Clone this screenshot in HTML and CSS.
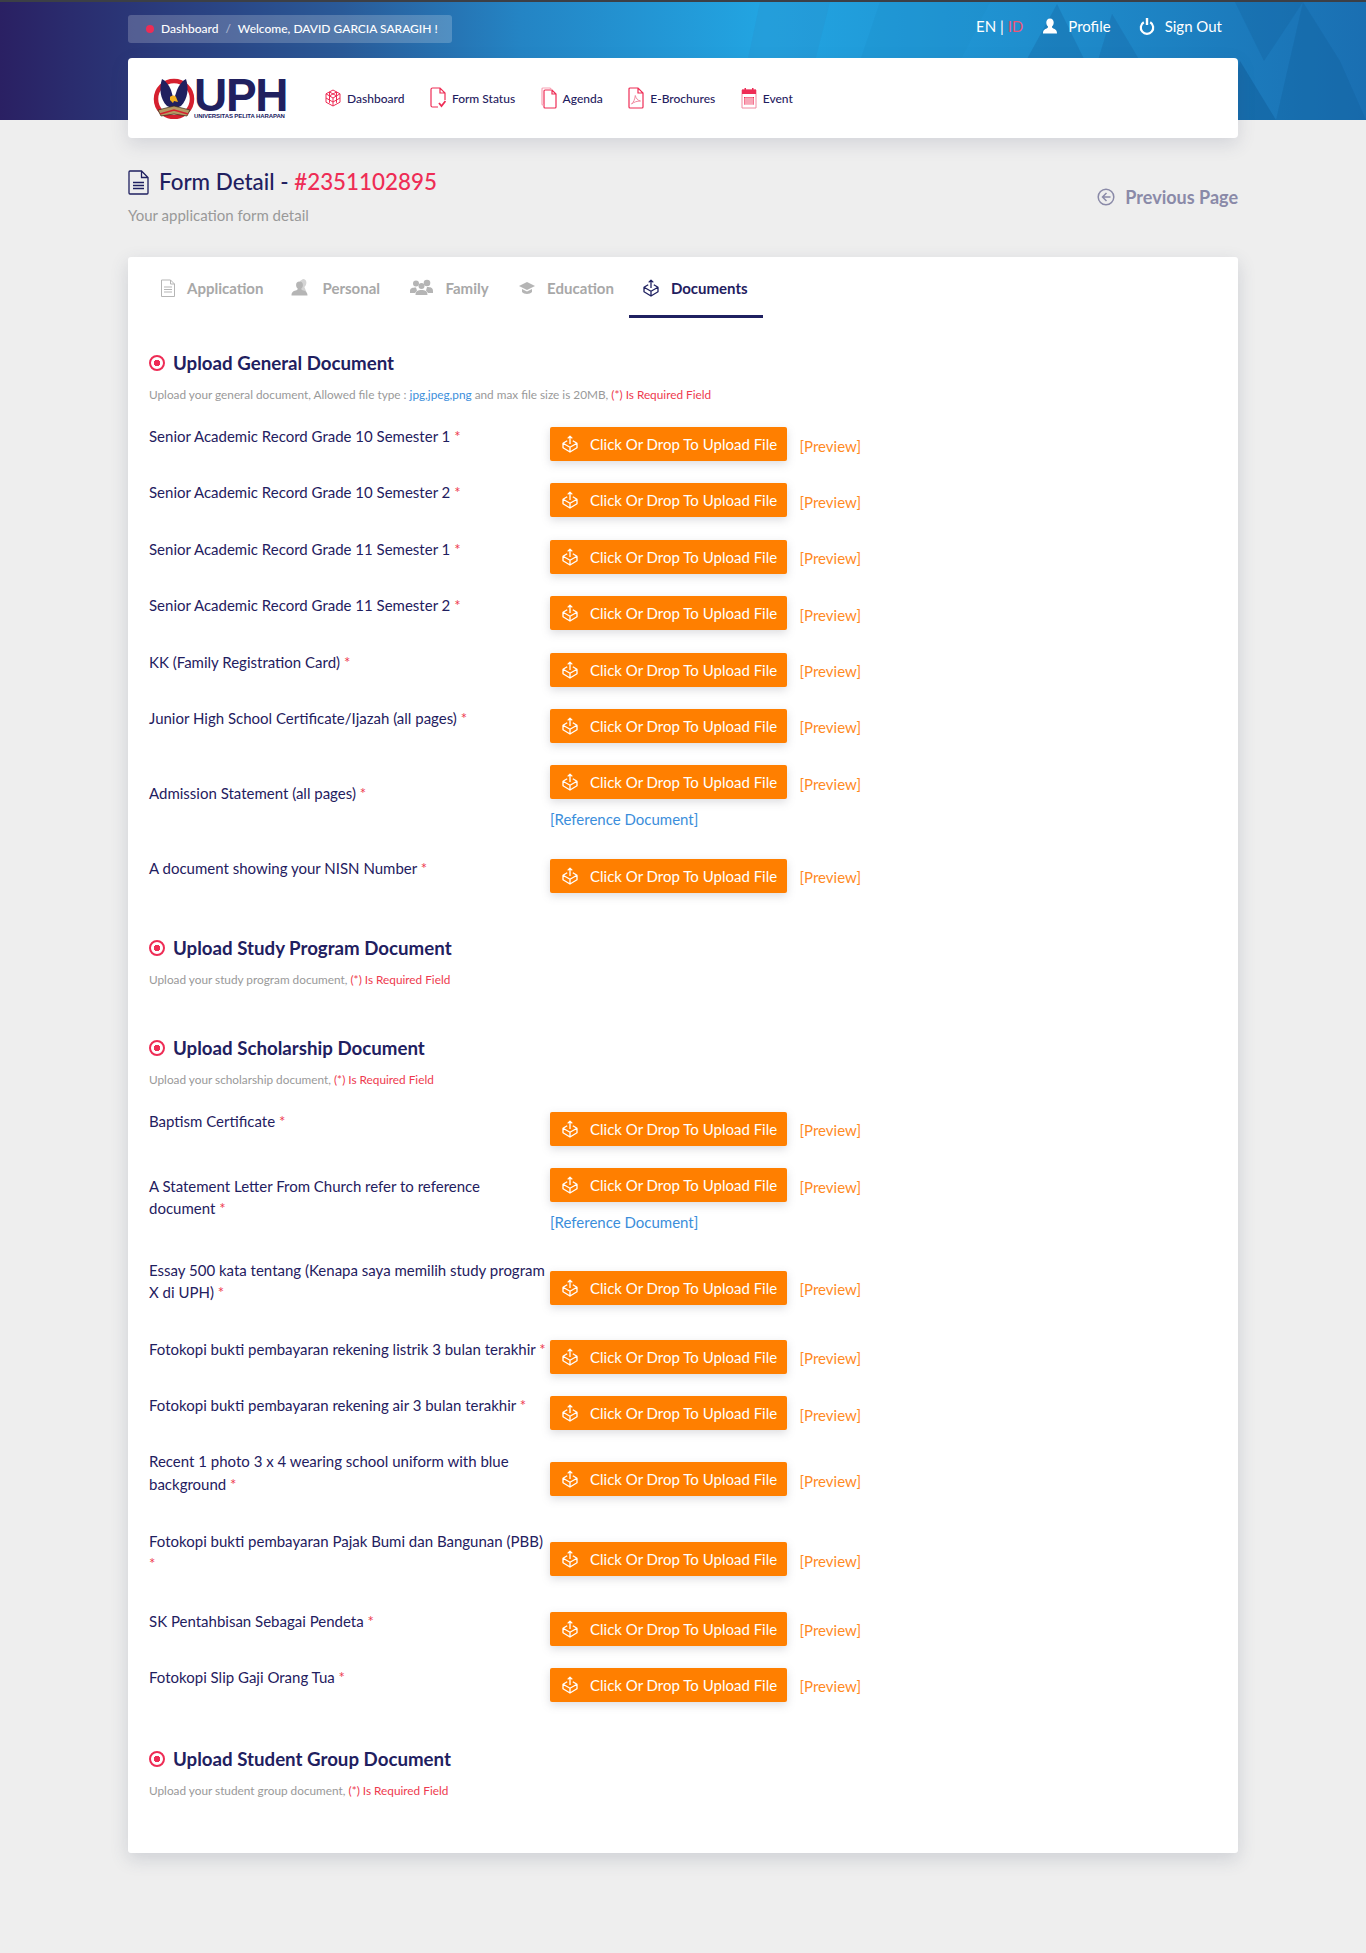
FILE: index.html
```html
<!DOCTYPE html>
<html>
<head>
  <title>Form Detail</title>
  <link rel="stylesheet" href="styles.css">
</head>
<body>
  <svg class="sprites" width="0" height="0">
    <symbol id="box" viewBox="0 0 16 18">
      <path d="M8 9V1.200M5.700 3.400 8 1.100l2.300 2.300M5.200 5.800 1 8.300l7 4 7-4-4.200-2.500M1 8.300v4.400l7 4.300 7-4.300V8.300M8 12.300V17" fill="none" stroke="currentColor" stroke-width="1.300" stroke-linejoin="round"/>
    </symbol>
  </svg>

  <header class="hero">
    <svg class="hero-shapes" viewBox="0 0 1366 120" preserveAspectRatio="none">
      <polygon points="760,0 830,0 800,120 735,120" fill="#2a8cc9" opacity=".25"/>
      <polygon points="880,0 990,0 960,60 920,120 880,120 860,60" fill="#1b8ac8" opacity=".25"/>
      <polygon points="1057,2 1084,58 1110,120 1000,120 1027,58" fill="#145f9c" opacity=".3"/>
      <polygon points="1112,12 1140,60 1160,120 1080,120" fill="#145f9c" opacity=".28"/>
      <polygon points="1303,0 1340,60 1366,120 1276,120" fill="#0f5c97" opacity=".3"/>
      <polygon points="1240,60 1276,120 1225,120" fill="#0f5c97" opacity=".45"/>
      <polygon points="1235,0 1303,0 1264,60" fill="#145f9c" opacity=".3"/>
    </svg>
    <div class="wrap hero-top">
      <div class="crumb">
        <span class="crumb-dot"></span>
        <span>Dashboard</span>
        <span class="crumb-sep">/</span>
        <span>Welcome, DAVID GARCIA SARAGIH !</span>
      </div>
      <div class="top-links">
        <span class="lang">EN | <span class="lang-off">ID</span></span>
        <a class="top-link profile">
          <svg width="16" height="16" viewBox="0 0 16 16"><path d="M8 .5c2.400 0 3.700 1.800 3.700 4 0 1.800-.8 3.300-1.700 4.100 0 1.100.3 1.500 1.300 1.900 1.800.7 3.700 1.400 3.700 5H1c0-3.600 1.900-4.300 3.700-5 1-.4 1.300-.8 1.300-1.900-.9-.8-1.700-2.300-1.700-4.100 0-2.200 1.300-4 3.700-4z" fill="#fff"/></svg>
          Profile
        </a>
        <a class="top-link signout">
          <svg width="16" height="18" viewBox="0 0 16 18"><path d="M4.800 5.300a6.200 6.200 0 1 0 6.400 0" fill="none" stroke="#fff" stroke-width="2.200"/><path d="M8 1v7" stroke="#fff" stroke-width="2.400"/></svg>
          Sign Out
        </a>
      </div>
    </div>
  </header>

  <div class="wrap">
    <nav class="navcard">
      <div class="logo">
        <svg class="logo-mark" width="42" height="42" viewBox="0 0 42 42">
          <circle cx="21" cy="22" r="18" fill="#fff" stroke="#d5202f" stroke-width="4.500"/>
          <path d="M9 2c4 2 7 6 9 11l2 7 2-1 2-6c2-5 5-9 9-11 3 9 2 20-5 27l-7 3-7-3C7 22 6 11 9 2z" fill="#20205f"/>
          <path d="M17 20c2-2 5-2 6 0l2 5-4-1-1 2-3-3z" fill="#f2b01e"/>
          <path d="M5 33l16-4 16 4-3 6-13-2-13 2z" fill="#b59a63" stroke="#3a2a1a" stroke-width=".7"/>
          <path d="M7 37l14-4 14 4" fill="none" stroke="#d5202f" stroke-width="1.500"/>
        </svg>
        <div class="logo-text">
          <div class="logo-big">UPH</div>
          <div class="logo-small">UNIVERSITAS PELITA HARAPAN</div>
        </div>
      </div>
      <a class="nav-item">
        <svg width="16" height="18" viewBox="0 0 16 18" fill="none" stroke="#ee2c55" stroke-width="1"><path d="M8 1l7 3.800v8.400L8 17l-7-3.800V4.800z"/><path d="M1 4.800 8 9l7-4.200M8 9v8M4.500 3v10.800M11.500 3v10.800M1 9l7 4 7-4M4.500 6.900l7-3.900M4.500 3l7 3.900"/></svg>
        Dashboard
      </a>
      <a class="nav-item">
        <svg width="16" height="22" viewBox="0 0 16 22" fill="none" stroke="#ee2c55" stroke-width="1.200"><path d="M8 20H2.500A1.500 1.500 0 0 1 1 18.500V2.500A1.500 1.500 0 0 1 2.500 1H10l5 5v7M10 1v5h5"/><path d="M9 16l2.500 3L15.500 14" stroke-width="1.800"/></svg>
        Form Status
      </a>
      <a class="nav-item">
        <svg width="16" height="22" viewBox="0 0 16 22" fill="none" stroke="#ee2c55" stroke-width="1.200"><path d="M4 21h10a1 1 0 0 0 1-1V7l-4-4H4a1 1 0 0 0-1 1v16a1 1 0 0 0 1 1zM11 3v4h4"/><path d="M3 18H2a1 1 0 0 1-1-1V2a1 1 0 0 1 1-1h7l2 2" stroke="#f7a3b5"/></svg>
        Agenda
      </a>
      <a class="nav-item">
        <svg width="16" height="22" viewBox="0 0 16 22" fill="none" stroke="#ee2c55" stroke-width="1.200"><path d="M2 21h12a1 1 0 0 0 1-1V6l-5-5H2a1 1 0 0 0-1 1v18a1 1 0 0 0 1 1zM10 1v5h5"/><path d="M3.500 17c2-1.500 3.500-5 3.800-8.500.7 3 2.500 5 5.200 5.500-3.500 0-6.500 1-9 3z" stroke-width="1" stroke="#f08aa0"/></svg>
        E-Brochures
      </a>
      <a class="nav-item">
        <svg width="16" height="22" viewBox="0 0 16 22"><path d="M1 3h14v18H1z" fill="#fff" stroke="#f08aa0" stroke-width="1"/><path d="M1 2.500h14V7H1zM3.500 1h1.500v2H3.500zM11 1h1.500v2H11z" fill="#ee2c55"/><path d="M3 10h10v7.500H3z" fill="#ee2c55"/><path d="M3 12h10M3 14h10M3 16h10M5 10v8M7 10v8M9 10v8M11 10v8" stroke="#fff" stroke-width=".7"/></svg>
        Event
      </a>
    </nav>

    <div class="page-head">
      <div>
        <h1 class="page-title">
          <svg width="21" height="25" viewBox="0 0 21 25" fill="none" stroke="#1f2060" stroke-width="1.300"><path d="M1 2a1 1 0 0 1 1-1h11.500L20 7.500V23a1 1 0 0 1-1 1H2a1 1 0 0 1-1-1zM13.500 1v6.500H20"/><path d="M5 12.500h11M5 15.500h11M5 18.500h11"/></svg>
          <span>Form Detail - <span class="form-no">#2351102895</span></span>
        </h1>
        <p class="page-sub">Your application form detail</p>
      </div>
      <a class="prev-page">
        <svg width="18" height="18" viewBox="0 0 18 18" fill="none" stroke="#8a8aa8" stroke-width="1.500"><circle cx="9" cy="9" r="7.800"/><path d="M9.500 5 5.500 9l4 4M5.500 9h8"/></svg>
        Previous Page
      </a>
    </div>

    <main class="card">
      <div class="tabs">
        <a class="tab">
          <svg width="14" height="18" viewBox="0 0 14 18" fill="none" stroke="#b5b5b5"><path d="M.5 1h9l4 4v12.500H.5zM9.500 1v4h4M3 8h8M3 10.500h8M3 13h8"/></svg>
          Application
        </a>
        <a class="tab">
          <svg width="19" height="18" viewBox="0 0 19 18"><path d="M12 0c2 0 3.400 1.500 3.400 3.500 0 2-1 3.500-2 4.500l2 5H9V2z" fill="#d4d4d4"/><path d="M8.500 2.500c2.300 0 3.400 1.500 3.400 3.500 0 1.600-.8 2.900-1.600 3.600 0 1 .3 1.300 1.300 1.700 2 .6 4.900 1.200 4.900 5.200H.5c0-4 2.900-4.600 4.900-5.200 1-.4 1.300-.7 1.300-1.700C5.900 8.900 5.100 7.600 5.100 6c0-2 1.100-3.500 3.400-3.500z" fill="#b5b5b5"/></svg>
          Personal
        </a>
        <a class="tab tab-family">
          <svg width="23" height="18" viewBox="0 0 23 18" fill="#b5b5b5"><circle cx="6" cy="4.500" r="3"/><circle cx="17" cy="4" r="3.300"/><circle cx="11.500" cy="7" r="3"/><path d="M0 12c0-3 2.500-3.500 6-3.500l1 3-2 2.500H0zM23 12c0-3.500-2.500-4-6-4l-1 3.500 2 2.500h5zM5.500 16c0-4 2.500-5 6-5s6 1 6 5z"/></svg>
          Family
        </a>
        <a class="tab tab-education">
          <svg width="16" height="14" viewBox="0 0 16 14" fill="#b5b5b5"><path d="M8 1l8 4-8 4-8-4z"/><path d="M3 8l5 2.500L13 8v3c-2 2.500-8 2.500-10 0z"/></svg>
          Education
        </a>
        <a class="tab tab-active">
          <svg width="16" height="18"><use href="#box"/></svg>
          Documents
        </a>
      </div>

      <section class="doc-section first">
        <h2 class="doc-title"><span class="bullet"></span>Upload General Document</h2>
        <p class="doc-note">Upload your general document, Allowed file type : <span class="blue">jpg,jpeg,png</span> and max file size is 20MB, <span class="red">(*) Is Required Field</span></p>

        <div class="row"><div class="row-label">Senior Academic Record Grade 10 Semester 1 <i>*</i></div><div class="row-ctl"><a class="upload"><svg width="16" height="18"><use href="#box"/></svg>Click Or Drop To Upload File</a><a class="preview">[Preview]</a></div></div>
        <div class="row"><div class="row-label">Senior Academic Record Grade 10 Semester 2 <i>*</i></div><div class="row-ctl"><a class="upload"><svg width="16" height="18"><use href="#box"/></svg>Click Or Drop To Upload File</a><a class="preview">[Preview]</a></div></div>
        <div class="row"><div class="row-label">Senior Academic Record Grade 11 Semester 1 <i>*</i></div><div class="row-ctl"><a class="upload"><svg width="16" height="18"><use href="#box"/></svg>Click Or Drop To Upload File</a><a class="preview">[Preview]</a></div></div>
        <div class="row"><div class="row-label">Senior Academic Record Grade 11 Semester 2 <i>*</i></div><div class="row-ctl"><a class="upload"><svg width="16" height="18"><use href="#box"/></svg>Click Or Drop To Upload File</a><a class="preview">[Preview]</a></div></div>
        <div class="row"><div class="row-label">KK (Family Registration Card) <i>*</i></div><div class="row-ctl"><a class="upload"><svg width="16" height="18"><use href="#box"/></svg>Click Or Drop To Upload File</a><a class="preview">[Preview]</a></div></div>
        <div class="row"><div class="row-label">Junior High School Certificate/Ijazah (all pages) <i>*</i></div><div class="row-ctl"><a class="upload"><svg width="16" height="18"><use href="#box"/></svg>Click Or Drop To Upload File</a><a class="preview">[Preview]</a></div></div>
        <div class="row row-admission"><div class="row-label">Admission Statement (all pages) <i>*</i></div><div><div class="row-ctl"><a class="upload"><svg width="16" height="18"><use href="#box"/></svg>Click Or Drop To Upload File</a><a class="preview">[Preview]</a></div><a class="ref-doc">[Reference Document]</a></div></div>
        <div class="row"><div class="row-label">A document showing your NISN Number <i>*</i></div><div class="row-ctl"><a class="upload"><svg width="16" height="18"><use href="#box"/></svg>Click Or Drop To Upload File</a><a class="preview">[Preview]</a></div></div>
      </section>

      <section class="doc-section study">
        <h2 class="doc-title"><span class="bullet"></span>Upload Study Program Document</h2>
        <p class="doc-note">Upload your study program document, <span class="red">(*) Is Required Field</span></p>
      </section>

      <section class="doc-section scholarship">
        <h2 class="doc-title"><span class="bullet"></span>Upload Scholarship Document</h2>
        <p class="doc-note">Upload your scholarship document, <span class="red">(*) Is Required Field</span></p>

        <div class="row"><div class="row-label">Baptism Certificate <i>*</i></div><div class="row-ctl"><a class="upload"><svg width="16" height="18"><use href="#box"/></svg>Click Or Drop To Upload File</a><a class="preview">[Preview]</a></div></div>
        <div class="row row-statement"><div class="row-label">A Statement Letter From Church refer to reference<br>document <i>*</i></div><div><div class="row-ctl"><a class="upload"><svg width="16" height="18"><use href="#box"/></svg>Click Or Drop To Upload File</a><a class="preview">[Preview]</a></div><a class="ref-doc">[Reference Document]</a></div></div>
        <div class="row row-two row-essay"><div class="row-label">Essay 500 kata tentang (Kenapa saya memilih study program X di UPH) <i>*</i></div><div class="row-ctl"><a class="upload"><svg width="16" height="18"><use href="#box"/></svg>Click Or Drop To Upload File</a><a class="preview">[Preview]</a></div></div>
        <div class="row"><div class="row-label">Fotokopi bukti pembayaran rekening listrik 3 bulan terakhir <i>*</i></div><div class="row-ctl"><a class="upload"><svg width="16" height="18"><use href="#box"/></svg>Click Or Drop To Upload File</a><a class="preview">[Preview]</a></div></div>
        <div class="row"><div class="row-label">Fotokopi bukti pembayaran rekening air 3 bulan terakhir <i>*</i></div><div class="row-ctl"><a class="upload"><svg width="16" height="18"><use href="#box"/></svg>Click Or Drop To Upload File</a><a class="preview">[Preview]</a></div></div>
        <div class="row row-two"><div class="row-label">Recent 1 photo 3 x 4 wearing school uniform with blue background <i>*</i></div><div class="row-ctl"><a class="upload"><svg width="16" height="18"><use href="#box"/></svg>Click Or Drop To Upload File</a><a class="preview">[Preview]</a></div></div>
        <div class="row row-two"><div class="row-label">Fotokopi bukti pembayaran Pajak Bumi dan Bangunan (PBB)<br><i>*</i></div><div class="row-ctl"><a class="upload"><svg width="16" height="18"><use href="#box"/></svg>Click Or Drop To Upload File</a><a class="preview">[Preview]</a></div></div>
        <div class="row"><div class="row-label">SK Pentahbisan Sebagai Pendeta <i>*</i></div><div class="row-ctl"><a class="upload"><svg width="16" height="18"><use href="#box"/></svg>Click Or Drop To Upload File</a><a class="preview">[Preview]</a></div></div>
        <div class="row"><div class="row-label">Fotokopi Slip Gaji Orang Tua <i>*</i></div><div class="row-ctl"><a class="upload"><svg width="16" height="18"><use href="#box"/></svg>Click Or Drop To Upload File</a><a class="preview">[Preview]</a></div></div>
      </section>

      <section class="doc-section group">
        <h2 class="doc-title"><span class="bullet"></span>Upload Student Group Document</h2>
        <p class="doc-note">Upload your student group document, <span class="red">(*) Is Required Field</span></p>
      </section>
    </main>
  </div>
</body>
</html>
```

FILE: styles.css
```css
* {
  box-sizing: border-box;
}
html, body {
  margin: 0;
  padding: 0;
}
body {
  font-family: Lato, "Liberation Sans", sans-serif;
  font-size: 15px;
  color: #1f2060;
  background: #eeeeee;
  height: 1953px;
  overflow: hidden;
}
a {
  color: inherit;
  text-decoration: none;
}
.sprites {
  position: absolute;
}
.wrap {
  width: 1110px;
  margin: 0 auto;
}

/* top */
.hero {
  position: relative;
  height: 120px;
  border-top: 2px solid #3c3f46;
  background: linear-gradient(90deg, #2a2063 0%, #2a5a98 25%, #2484c4 38%, #22a5e2 56%, #1f8fce 75%, #1a6fb2 100%);
}
.hero-shapes {
  position: absolute;
  top: 0;
  left: 0;
  width: 100%;
  height: 100%;
}
.hero-top {
  position: relative;
  display: flex;
  justify-content: space-between;
  padding-top: 13px;
}
.crumb {
  display: flex;
  align-items: center;
  width: 324px;
  height: 28px;
  padding-left: 18px;
  padding-bottom: 1px;
  border-radius: 3px;
  background: rgba(255, 255, 255, .2);
  color: #fff;
  font-size: 12px;
  font-weight: 500;
}
.crumb-dot {
  width: 8px;
  height: 8px;
  margin-right: 7px;
  border-radius: 50%;
  background: #ee2c55;
}
.crumb-sep {
  margin: 0 7px;
  opacity: .5;
}
.top-links {
  display: flex;
  align-items: center;
  height: 22px;
  padding-right: 16px;
  color: #fff;
  font-size: 15px;
}
.lang-off {
  color: #ee5577;
}
.top-link {
  display: flex;
  align-items: center;
  gap: 10px;
}
.profile {
  margin-left: 19px;
}
.signout {
  margin-left: 28px;
}

/* nav */
.navcard {
  display: flex;
  align-items: center;
  height: 80px;
  margin-top: -62px;
  position: relative;
  padding-left: 25px;
  border-radius: 4px;
  background: #fff;
  box-shadow: 0 6px 18px rgba(60, 70, 100, .15);
}
.logo {
  display: flex;
  align-items: flex-start;
  width: 172px;
  height: 42px;
}
.logo-mark {
  flex: none;
}
.logo-text {
  margin-left: -1px;
}
.logo-big {
  font-family: "Liberation Sans", Arial, sans-serif;
  font-weight: 700;
  font-size: 46px;
  line-height: 36px;
  letter-spacing: -1.300px;
  color: #20205f;
}
.logo-small {
  font-family: "Liberation Sans", Arial, sans-serif;
  font-weight: 700;
  font-size: 6px;
  line-height: 6px;
  letter-spacing: -.1px;
  color: #20205f;
}
.nav-item {
  display: flex;
  align-items: center;
  gap: 6px;
  margin-right: 25.500px;
  font-size: 12px;
  font-weight: 500;
  color: #1f2060;
}

/* page head */
.page-head {
  display: flex;
  justify-content: space-between;
  align-items: flex-end;
  height: 119px;
  padding-bottom: 32px;
}
.page-title {
  display: flex;
  align-items: center;
  gap: 10px;
  margin: 0;
  font-size: 22.400px;
  font-weight: 500;
  line-height: 30px;
}
.form-no {
  color: #ee2c55;
}
.page-sub {
  margin: 8px 0 0;
  font-size: 15px;
  line-height: 20px;
  color: #999;
}
.prev-page {
  display: flex;
  align-items: center;
  gap: 10px;
  margin-bottom: 17px;
  font-size: 18px;
  font-weight: 700;
  color: #8a8aa8;
}

/* card */
.card {
  height: 1596px;
  padding: 0 21px;
  border-radius: 3px;
  background: #fff;
  box-shadow: 0 6px 18px rgba(60, 70, 100, .18);
}
.tabs {
  display: flex;
  height: 61px;
  margin-left: -2px;
}
.tab {
  display: flex;
  align-items: center;
  gap: 12px;
  height: 61px;
  padding: 0 14px;
  font-size: 15px;
  font-weight: 700;
  color: #a8a8a8;
}
.tab-family,
.tab-education {
  margin-left: 2.500px;
}
.tab-active {
  margin-left: 1px;
  padding-right: 15px;
  color: #1f2060;
  box-shadow: inset 0 -3px 0 #1f2060;
}

/* sections */
.doc-section.first {
  padding-top: 32px;
}
.doc-section.study {
  margin-top: 21.500px;
}
.doc-section.scholarship {
  margin-top: 46px;
}
.doc-section.group {
  margin-top: 23.500px;
}
.doc-title {
  display: flex;
  align-items: center;
  margin: 0;
  font-size: 18.700px;
  font-weight: 700;
  line-height: 26px;
}
.bullet {
  width: 16px;
  height: 16px;
  margin-right: 8px;
  border-radius: 50%;
  border: 2px solid #ee2c55;
  background: radial-gradient(circle, #ee2c55 0 3px, #fff 3.500px);
}
.doc-note {
  margin: 10px 0 21px;
  font-size: 11.800px;
  line-height: 18px;
  color: #999;
}
.blue {
  color: #3b8edb;
}
.red {
  color: #ee3a4e;
}
.row {
  display: grid;
  grid-template-columns: 401px 1fr;
  align-items: start;
  height: 56.400px;
}
.row-label {
  line-height: 22.400px;
}
.row-label i {
  font-style: normal;
  color: #ee3a4e;
}
.row-ctl {
  display: flex;
  align-items: center;
  padding-top: 2px;
}
.upload {
  display: flex;
  align-items: center;
  gap: 12px;
  width: 237px;
  height: 34px;
  padding-left: 12px;
  border-radius: 2px;
  background: #ff7f00;
  color: #fff;
  white-space: nowrap;
  box-shadow: 0 3px 8px rgba(120, 120, 130, .25);
}
.preview {
  margin: 3px 0 0 12.500px;
  color: #ff8a1f;
}
.ref-doc {
  display: block;
  margin-top: 9px;
  color: #3b8edb;
  line-height: 22.400px;
}
.row-admission {
  height: 93.500px;
}
.row-admission .row-label {
  padding-top: 19px;
}
.row-statement {
  height: 92.500px;
}
.row-statement .row-label {
  padding-top: 8.500px;
}
.row-two {
  height: 79.600px;
}
.row-two .row-ctl {
  padding-top: 12px;
}
.row-essay {
  height: 79px;
}
```
